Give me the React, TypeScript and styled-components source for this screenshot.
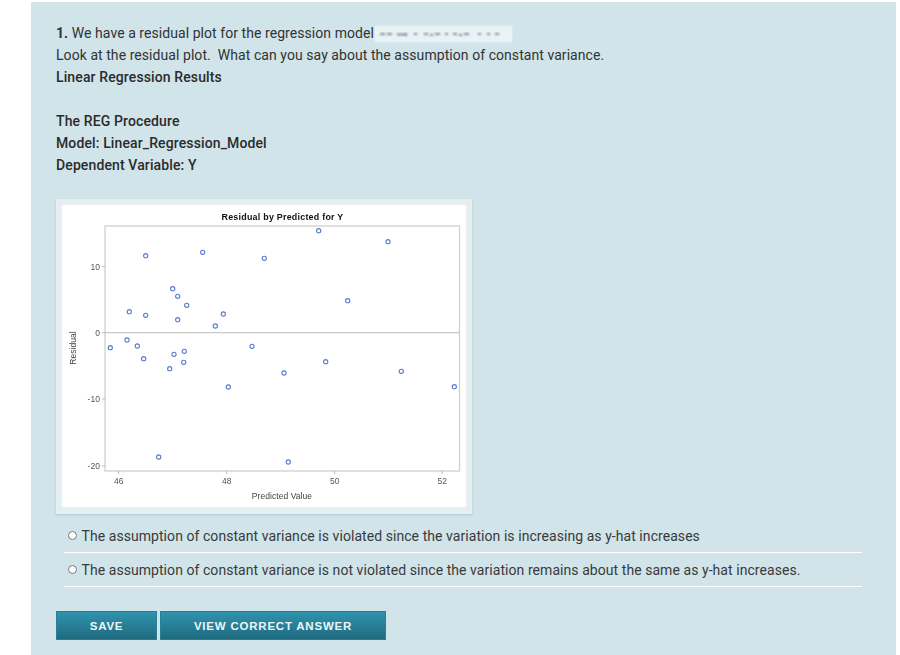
import React from 'react';
import styled, { createGlobalStyle } from 'styled-components';

const GlobalStyle = createGlobalStyle`
  body {
    margin: 0;
    background: #ffffff;
    font-family: Roboto, "Liberation Sans", sans-serif;
  }
`;

const Panel = styled.main`
  box-sizing: border-box;
  width: 865px;
  height: 653px;
  margin: 2px 0 0 31px;
  padding: 20px 25px 0;
  background: #d0e4ea;
  color: #333333;
  font-size: 14px;
  line-height: 22px;
  letter-spacing: 0.06px;
`;

const Line = styled.div<{ $gapBefore?: boolean }>`
  margin-top: ${(p) => (p.$gapBefore ? '22px' : '0')};
  white-space: pre;
`;

const Strong = styled.span`
  font-weight: 700;
`;

const BoldLine = styled(Line)`
  font-weight: 500;
  letter-spacing: 0.12px;
  color: #2b2b2b;
`;

const FormulaImage = styled.span`
  display: inline-block;
  vertical-align: top;
  width: 137px;
  height: 16px;
  margin: 4px 0 0 -2px;
  background: #e9f2f4;
  box-shadow: 0 0 2px rgba(255, 255, 255, 0.6);
`;

const PlotFrame = styled.figure`
  box-sizing: border-box;
  width: 416px;
  height: 315px;
  margin: 23px 0 0;
  padding: 5px;
  background: #e3eff1;
  box-shadow: 0 1px 2px rgba(120, 150, 160, 0.35);
`;

const PlotSurface = styled.svg`
  display: block;
  width: 406px;
  height: 304px;
  background: #ffffff;
  outline: 1px solid #eeeeee;
  outline-offset: -1px;
  filter: blur(0.4px);
  font-family: "Liberation Sans", Arial, sans-serif;
`;

const OptionList = styled.div`
  width: 798px;
  margin: 5px 0 0 8px;
`;

const Option = styled.label`
  display: flex;
  align-items: center;
  box-sizing: border-box;
  height: 34px;
  padding: 0 0 0 4px;
  border-bottom: 1px solid #ffffff;
  font-size: 14px;
  color: #3a3a3a;
`;

const Radio = styled.input`
  width: 9px;
  height: 9px;
  margin: 0 4.5px 0 0;
  flex: none;
`;

const ButtonRow = styled.div`
  display: flex;
  gap: 3px;
  margin-top: 24px;
`;

const ActionButton = styled.button<{ $width: number }>`
  box-sizing: border-box;
  width: ${(p) => p.$width}px;
  height: 29px;
  padding: 0;
  border: 1px solid #2a7f95;
  background: linear-gradient(180deg, #2f93ad 0%, #1f6b80 100%);
  color: #ecf6f8;
  font-family: "Liberation Sans", Arial, sans-serif;
  font-size: 11.5px;
  font-weight: 700;
  letter-spacing: 0.78px;
`;

// screen positions of the residuals, minus the plot's own offset
const points: [number, number][] = [
  [145.7, 255.7], [202.7, 252.3], [264.3, 258.3], [172.7, 288.7], [177.7, 296.3],
  [186.7, 305.3], [129.3, 311.7], [145.7, 315.3], [177.7, 319.7], [223.3, 314],
  [215.3, 326], [127, 340], [110.3, 347.7], [137.3, 346], [252, 346.3],
  [184.3, 351.3], [174, 354.3], [318.7, 230.7], [388, 241.7], [347.7, 300.7],
  [143.7, 358.7], [169.7, 368.7], [183.7, 362.3], [228.3, 387], [158.7, 457],
  [284, 373], [325.7, 361.7], [401.3, 371.3], [454.3, 386.7], [288.3, 462],
];

const yTicks: [string, number][] = [['10', 266.7], ['0', 332.7], ['-10', 399], ['-20', 466]];
const xTicks: [string, number][] = [['46', 118.7], ['48', 226.7], ['50', 334.7], ['52', 442.3]];

const ResidualPlot = () => (
  <PlotSurface viewBox="61 204 406 304">
    <text x="282.5" y="219.5" textAnchor="middle" fontSize="8.9" fontWeight="700" fill="#111" letterSpacing="0.25">
      Residual by Predicted for Y
    </text>
    <rect x="105" y="226" width="354.5" height="245" fill="none" stroke="#d0d0d0" strokeWidth="1.3" />
    <line x1="105" y1="332.7" x2="459.5" y2="332.7" stroke="#c8c8c8" strokeWidth="1.3" />
    {yTicks.map(([label, y]) => (
      <g key={label}>
        <line x1="102" y1={y} x2="105" y2={y} stroke="#bbb" />
        <text x="100" y={y + 3} textAnchor="end" fontSize="8.5" fill="#555">{label}</text>
      </g>
    ))}
    {xTicks.map(([label, x]) => (
      <g key={label}>
        <line x1={x} y1="471" x2={x} y2="474" stroke="#bbb" />
        <text x={x} y="484" textAnchor="middle" fontSize="8.5" fill="#555">{label}</text>
      </g>
    ))}
    <text x="282" y="498.5" textAnchor="middle" fontSize="8.5" fill="#444">Predicted Value</text>
    <text transform="translate(75.5 348) rotate(-90)" textAnchor="middle" fontSize="8.5" fill="#444">Residual</text>
    {points.map(([x, y]) => (
      <circle key={`${x}-${y}`} cx={x} cy={y} r="2.1" fill="none" stroke="#5a7ccc" strokeWidth="1.1" />
    ))}
  </PlotSurface>
);

const BlurredFormula = () => (
  <FormulaImage>
    <svg width="137" height="16" viewBox="0 0 137 16">
      <defs>
        <filter id="smear"><feGaussianBlur stdDeviation="0.9" /></filter>
      </defs>
      <path
        d="M5 8h5M12 8h5M22 8.5h8M31 7v3M39 8h3M49 8h4M55 9h3M60 8h5M70 8h3M78 8h4M84 9h3M89 8h5M103 8h3M112 8h3M120 8h4"
        stroke="#7d8e98"
        strokeWidth="2.2"
        fill="none"
        filter="url(#smear)"
      />
    </svg>
  </FormulaImage>
);

const options = [
  'The assumption of constant variance is violated since the variation is increasing as y-hat increases',
  'The assumption of constant variance is not violated since the variation remains about the same as y-hat increases.',
];

export default function App() {
  return (
    <>
      <GlobalStyle />
      <Panel>
        <Line>
          <Strong>1.</Strong> We have a residual plot for the regression model <BlurredFormula />
        </Line>
        <Line>Look at the residual plot.  What can you say about the assumption of constant variance.</Line>
        <BoldLine>Linear Regression Results</BoldLine>
        <BoldLine $gapBefore>The REG Procedure</BoldLine>
        <BoldLine>Model: Linear_Regression_Model</BoldLine>
        <BoldLine>Dependent Variable: Y</BoldLine>
        <PlotFrame>
          <ResidualPlot />
        </PlotFrame>
        <OptionList>
          {options.map((text) => (
            <Option key={text}>
              <Radio type="radio" name="answer" />
              {text}
            </Option>
          ))}
        </OptionList>
        <ButtonRow>
          <ActionButton $width={101}>SAVE</ActionButton>
          <ActionButton $width={226}>VIEW CORRECT ANSWER</ActionButton>
        </ButtonRow>
      </Panel>
    </>
  );
}
